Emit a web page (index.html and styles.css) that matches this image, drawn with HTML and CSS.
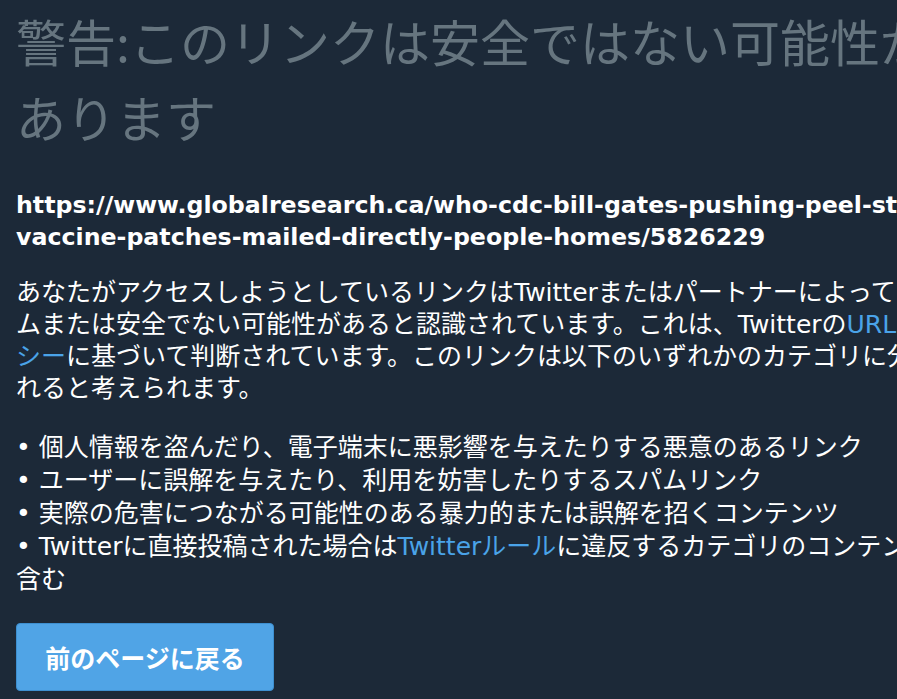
FILE: index.html
```html
<!DOCTYPE html>
<html lang="ja">
<head>
<meta charset="utf-8">
<title>警告</title>
<link rel="stylesheet" href="styles.css">
</head>
<body>
<main class="page">
  <h1 class="title">警告:このリンクは安全ではない可能性が<br>あります</h1>
  <p class="url">https://www.globalresearch.ca/who-cdc-bill-gates-pushing-peel-stick-<br>vaccine-patches-mailed-directly-people-homes/5826229</p>
  <p class="desc">あなたがアクセスしようとしているリンクはTwitterまたはパートナーによってスパ<br>ムまたは安全でない可能性があると認識されています。これは、Twitterの<a class="link" href="#">URLポリ<br>シー</a>に基づいて判断されています。このリンクは以下のいずれかのカテゴリに分類さ<br>れると考えられます。</p>
  <ul class="reasons">
    <li class="reason">個人情報を盗んだり、電子端末に悪影響を与えたりする悪意のあるリンク</li>
    <li class="reason">ユーザーに誤解を与えたり、利用を妨害したりするスパムリンク</li>
    <li class="reason">実際の危害につながる可能性のある暴力的または誤解を招くコンテンツ</li>
    <li class="reason">Twitterに直接投稿された場合は<a class="link" href="#">Twitterルール</a>に違反するカテゴリのコンテンツを<br>含む</li>
  </ul>
  <button class="back" type="button">前のページに戻る</button>
</main>
</body>
</html>
```

FILE: styles.css
```css
html, body {
  margin: 0;
  padding: 0;
}
body {
  background: #1c2938;
  color: #ffffff;
  font-family: "DejaVu Sans", "Noto Sans CJK JP", sans-serif;
  overflow: hidden;
}
.page {
  width: 1000px;
  padding: 2px 16px 0;
  white-space: nowrap;
}
.title {
  margin: 0;
  font-family: "Noto Sans CJK JP", sans-serif;
  font-weight: 400;
  font-size: 50px;
  line-height: 76px;
  color: #66757f;
}
.url {
  margin: 35px 0 0;
  font-size: 23.7px;
  font-weight: bold;
  line-height: 32px;
}
.desc {
  margin: 24px 0 0;
  font-size: 25px;
  line-height: 32px;
}
.link {
  color: #4aa3e8;
  text-decoration: none;
}
.reasons {
  margin: 26px 0 0;
  padding: 0;
  list-style: none;
  font-size: 25px;
  line-height: 33px;
}
.reason::before {
  content: "• ";
}
.back {
  margin-top: 27px;
  width: 258px;
  height: 68px;
  background: #50a4e6;
  border: 1px solid #3d8fd0;
  border-radius: 4px;
  color: #ffffff;
  font-family: "Noto Sans CJK JP", sans-serif;
  font-weight: bold;
  font-size: 25px;
  padding: 0;
}
```
